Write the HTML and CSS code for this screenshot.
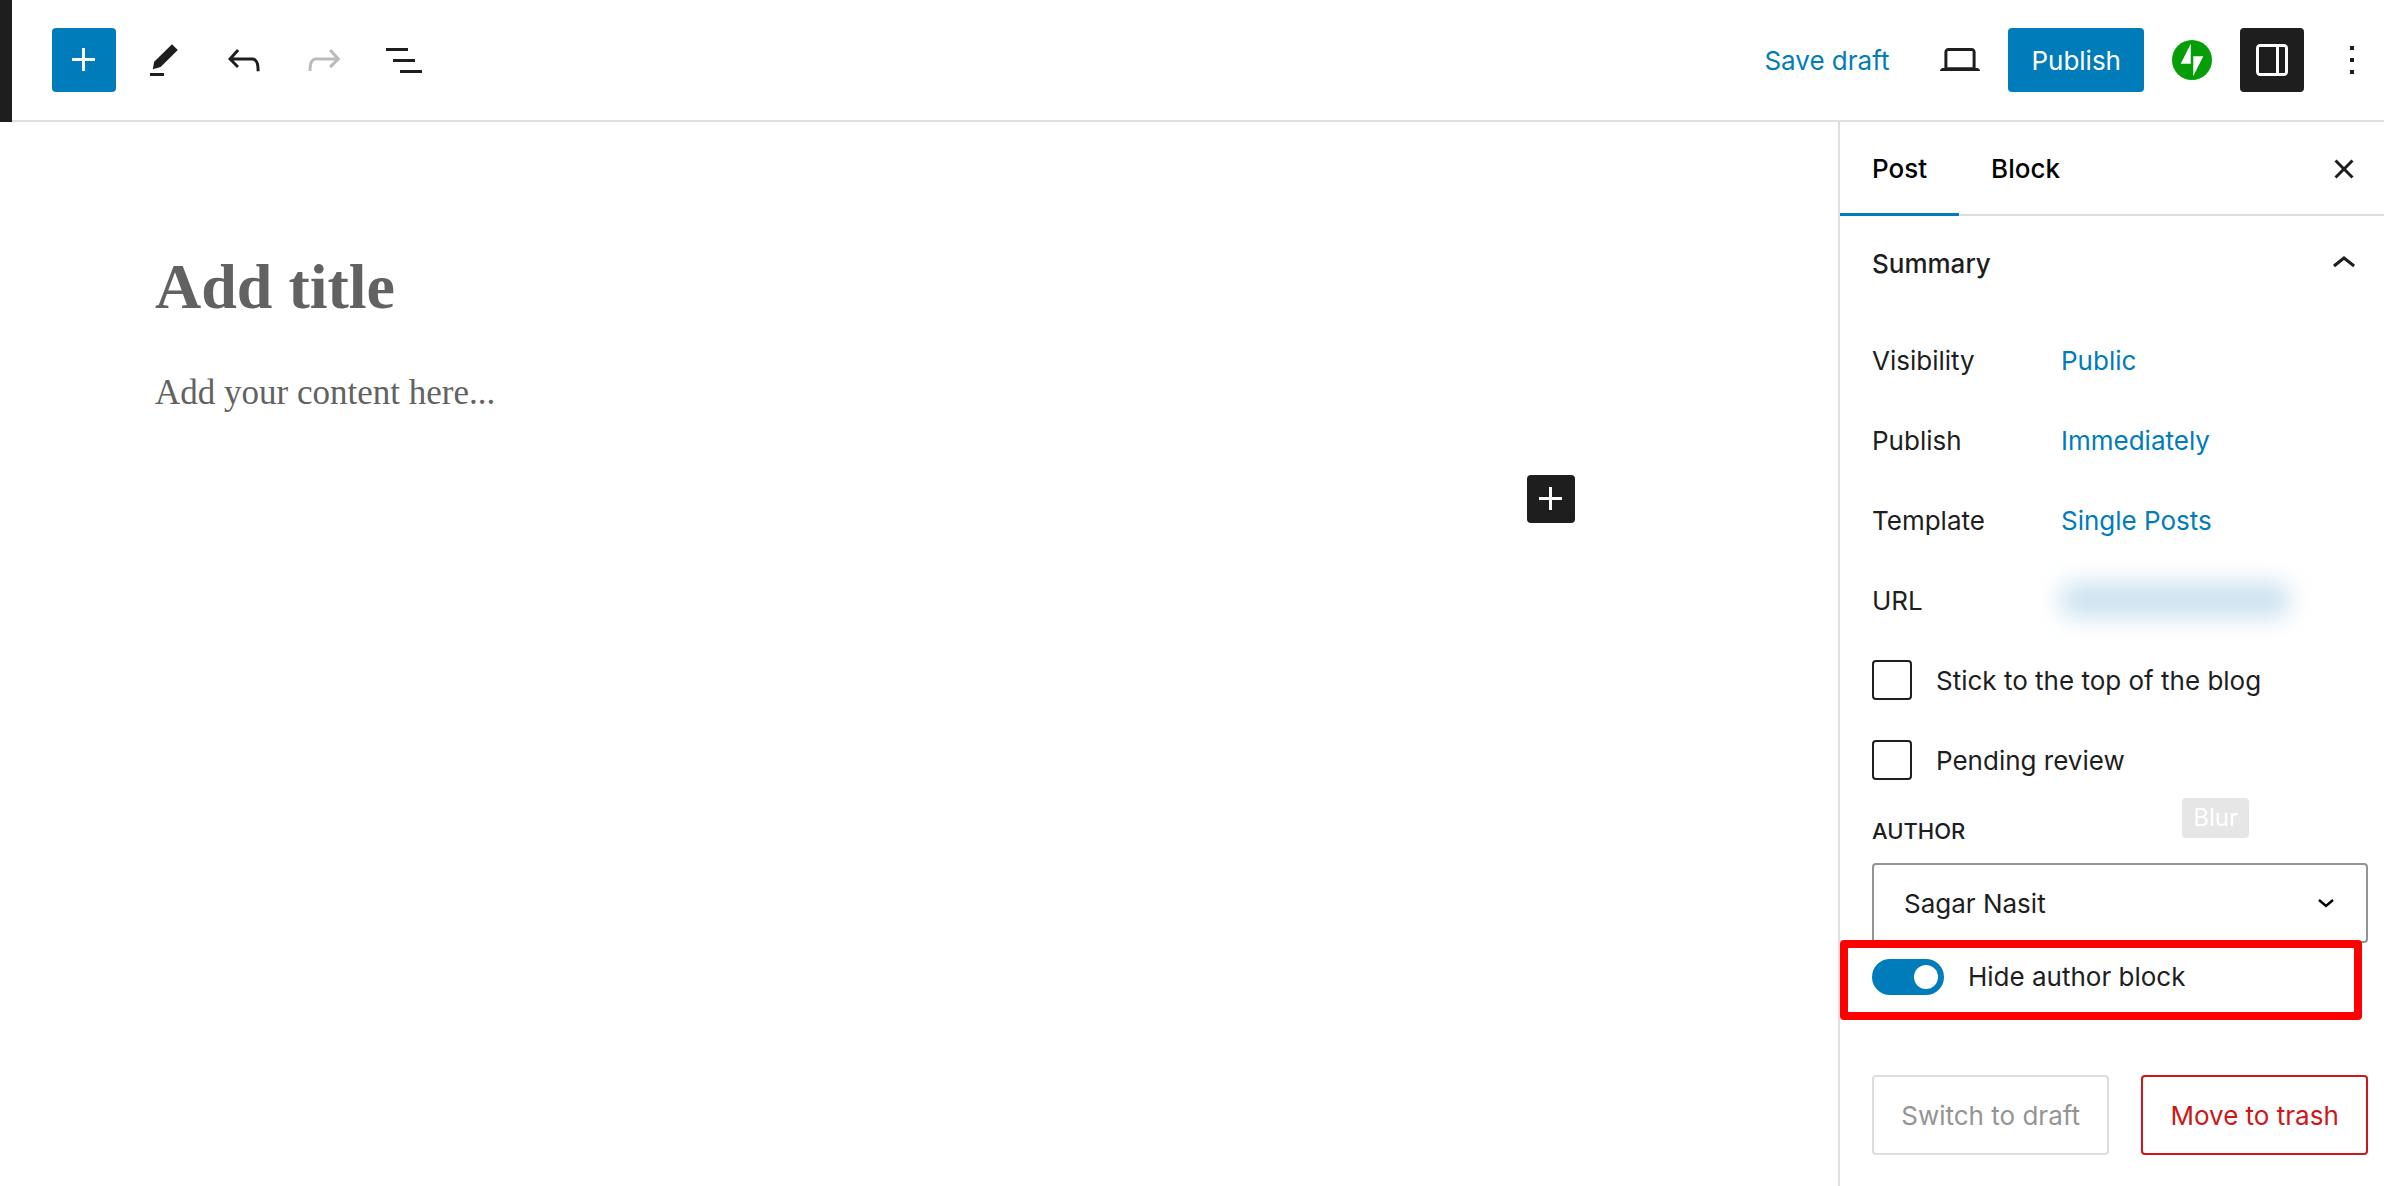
FILE: index.html
```html
<!DOCTYPE html>
<html lang="en">
<head>
  <meta charset="UTF-8">
  <meta name="viewport" content="width=device-width, initial-scale=1.0">
  <title>Add New Post</title>
  <link rel="stylesheet" href="styles.css">
</head>
<body>
  <!-- Top toolbar -->
  <header class="header">
    <div class="header-edge"></div>
    <div class="toolbar">
      <button class="icon-button primary" aria-label="Toggle block inserter">
        <svg class="icon" viewBox="0 0 24 24"><path d="M11 12.5V17.5H12.5V12.5H17.5V11H12.5V6H11V11H6V12.5H11Z"/></svg>
      </button>
      <button class="icon-button" aria-label="Tools">
        <svg class="icon" viewBox="0 0 24 24"><path d="M16 4.1L18.9 7 10.3 15.5 6.4 16.6 7.1 12.9zM5 18.5h7V20H5z"/></svg>
      </button>
      <button class="icon-button" aria-label="Undo">
        <svg class="icon" viewBox="0 0 24 24"><path d="M18.3 11.7c-.6-.6-1.4-.9-2.3-.9H6.7l2.9-3.3-1.1-1-4.5 5L8.5 16l1-1-2.7-2.7H16c.5 0 .9.2 1.3.5 1 1 1 3.4 1 4.5v.3h1.5v-.2c0-1.5 0-4.3-1.5-5.7z"/></svg>
      </button>
      <button class="icon-button" aria-label="Redo" disabled>
        <svg class="icon" viewBox="0 0 24 24"><path d="M15.6 6.5l-1.1 1 2.9 3.3H8c-.9 0-1.7.3-2.3.9-1.4 1.5-1.4 4.2-1.4 5.6v.2h1.5v-.3c0-1.1 0-3.5 1-4.5.3-.3.7-.5 1.3-.5h9.2L14.5 15l1.1 1.1 4.6-4.6-4.6-5z"/></svg>
      </button>
      <button class="icon-button" aria-label="Document overview">
        <svg class="icon" viewBox="0 0 24 24"><path d="M3 6h11v1.5H3zM6.5 11.5h11V13h-11zM10 17h11v1.5H10z"/></svg>
      </button>
    </div>
    <div class="settings">
      <button class="link-button">Save draft</button>
      <button class="icon-button" aria-label="Preview">
        <svg class="icon" viewBox="0 0 24 24"><path d="M20.5 16h-.7V8c0-1.1-.9-2-2-2H6.2c-1.1 0-2 .9-2 2v8h-.7c-.8 0-1.5.7-1.5 1.5h20c0-.8-.7-1.5-1.5-1.5zM5.7 8c0-.3.2-.5.5-.5h11.6c.3 0 .5.2.5.5v7.6H5.7V8z"/></svg>
      </button>
      <button class="publish-button">Publish</button>
      <button class="icon-button" aria-label="Jetpack">
        <svg class="jetpack" viewBox="0 0 32 32"><circle cx="16" cy="16" r="16" fill="#069e08"/><path fill="#fff" d="M15 19H7l8-16zM17 29V13h8z"/></svg>
      </button>
      <button class="icon-button pressed" aria-label="Settings">
        <svg class="icon" viewBox="0 0 24 24"><path d="M18 4H6c-1.1 0-2 .9-2 2v12c0 1.1.9 2 2 2h12c1.1 0 2-.9 2-2V6c0-1.1-.9-2-2-2zm-4 14.5H6c-.3 0-.5-.2-.5-.5V6c0-.3.2-.5.5-.5h8v13zm4.5-.5c0 .3-.2.5-.5.5h-2.5v-13H18c.3 0 .5.2.5.5v12z"/></svg>
      </button>
      <button class="icon-button" aria-label="Options">
        <svg class="icon" viewBox="0 0 24 24"><path d="M13 19h-2v-2h2v2zm0-6h-2v-2h2v2zm0-6h-2V5h2v2z"/></svg>
      </button>
    </div>
  </header>

  <div class="body">
    <!-- Editor canvas -->
    <main class="editor">
      <h1 class="post-title">Add title</h1>
      <p class="post-content">Add your content here...</p>
      <button class="inserter" aria-label="Add block">
        <svg class="icon" viewBox="0 0 24 24"><path d="M11 12.5V17.5H12.5V12.5H17.5V11H12.5V6H11V11H6V12.5H11Z"/></svg>
      </button>
    </main>

    <!-- Post settings -->
    <aside class="sidebar">
      <div class="tabs">
        <button class="tab active">Post</button>
        <button class="tab">Block</button>
        <button class="icon-button close" aria-label="Close settings">
          <svg class="icon" viewBox="0 0 24 24"><path d="M12 13.06l3.712 3.713 1.061-1.06L13.061 12l3.712-3.712-1.06-1.06L12 10.938 8.288 7.227l-1.061 1.06L10.939 12l-3.712 3.712 1.06 1.061L12 13.061z"/></svg>
        </button>
      </div>

      <button class="panel-title">
        Summary
        <svg class="icon" viewBox="0 0 24 24"><path d="M6.5 12.4L12 8l5.5 4.4-.9 1.2L12 10l-4.5 3.6-1-1.2z"/></svg>
      </button>

      <div class="panel">
        <div class="row"><span class="row-label">Visibility</span><a href="#">Public</a></div>
        <div class="row"><span class="row-label">Publish</span><a href="#">Immediately</a></div>
        <div class="row"><span class="row-label">Template</span><a href="#">Single Posts</a></div>
        <div class="row"><span class="row-label">URL</span><a class="blurred" href="#" aria-label="URL"></a></div>
        <div class="row check-row">
          <input type="checkbox" id="sticky">
          <label for="sticky">Stick to the top of the blog</label>
        </div>
        <div class="row check-row">
          <input type="checkbox" id="pending">
          <label for="pending">Pending review</label>
        </div>

        <div class="author">
          <label class="author-label" for="author">AUTHOR</label>
          <span class="badge">Blur</span>
          <div class="select">
            <select id="author">
              <option>Sagar Nasit</option>
            </select>
            <svg class="select-arrow" viewBox="0 0 18 10"><path d="M2 2l7 6 7-6" fill="none" stroke="#000" stroke-width="2.4"/></svg>
          </div>
        </div>

        <div class="toggle-row">
          <input type="checkbox" class="toggle" id="hide-author" checked>
          <label for="hide-author">Hide author block</label>
          <div class="highlight"></div>
        </div>

        <div class="actions">
          <button class="action" disabled>Switch to draft</button>
          <button class="action danger">Move to trash</button>
        </div>
      </div>
    </aside>
  </div>
</body>
</html>
```
FILE: styles.css
```css
* {
  box-sizing: border-box;
}

body {
  margin: 0;
  min-height: 100vh;
  display: flex;
  flex-direction: column;
  background: #fff;
  color: #1e1e1e;
  font-family: Inter, "Liberation Sans", sans-serif;
  font-size: 26px;
  line-height: 32px;
}

button,
select {
  margin: 0;
  padding: 0;
  border: none;
  background: none;
  color: inherit;
  font: inherit;
  cursor: pointer;
}

a {
  color: #007cba;
  text-decoration: none;
}

.icon {
  width: 48px;
  height: 48px;
  fill: currentColor;
  flex-shrink: 0;
}

/* Header */
.header {
  display: flex;
  height: 122px;
}

.header-edge {
  width: 12px;
  background: #1e1e1e;
}

.toolbar,
.settings {
  display: flex;
  align-items: center;
  gap: 16px;
  border-bottom: 2px solid #e0e0e0;
}

.toolbar {
  flex: 1;
  padding-left: 40px;
}

.icon-button {
  display: flex;
  align-items: center;
  justify-content: center;
  width: 64px;
  height: 64px;
  border-radius: 4px;
}

.icon-button:disabled {
  color: #bbb;
}

.primary {
  background: #007cba;
  color: #fff;
}

.pressed {
  background: #1e1e1e;
  color: #fff;
}

.link-button,
.publish-button {
  height: 64px;
  padding: 2px 23px 0;
}

.link-button {
  color: #007cba;
}

.publish-button {
  border-radius: 4px;
  background: #007cba;
  color: #fff;
}

.jetpack {
  width: 40px;
  height: 40px;
}

/* Editor */
.body {
  flex: 1;
  display: flex;
}

.editor {
  flex: 1;
  display: flex;
  flex-direction: column;
  padding: 127px 263px 0 155px;
  color: #626262;
  font-family: "Liberation Serif", serif;
}

.post-title {
  margin: 0;
  font-size: 64px;
  line-height: 76px;
}

.post-content {
  margin: 44px 0 0;
  font-size: 35px;
  line-height: 48px;
}

.inserter {
  align-self: flex-end;
  width: 48px;
  height: 48px;
  margin-top: 58px;
  border-radius: 4px;
  background: #1e1e1e;
  color: #fff;
}

/* Sidebar */
.sidebar {
  width: 546px;
  border-left: 2px solid #e0e0e0;
}

.tabs {
  display: flex;
  height: 94px;
  box-shadow: inset 0 -2px #ddd;
}

.tab {
  padding: 0 32px;
  color: #000;
  font-weight: 500;
}

.active {
  box-shadow: inset 0 -3px #007cba;
}

.close {
  align-self: center;
  margin: 0 8px 0 auto;
}

.panel-title {
  display: flex;
  align-items: center;
  justify-content: space-between;
  width: 100%;
  height: 96px;
  padding: 0 16px 0 32px;
  font-weight: 500;
}

.panel {
  display: flex;
  flex-direction: column;
  gap: 16px;
  padding: 16px 16px 24px 32px;
}

.row {
  display: flex;
  align-items: center;
  height: 64px;
}

.row span,
.row a,
.row label {
  padding-top: 2px;
}

.row-label {
  width: 189px;
}

.blurred {
  width: 228px;
  height: 34px;
  border-radius: 12px;
  background: #c9e1ee;
  filter: blur(12px);
}

.check-row {
  gap: 24px;
}

.check-row input {
  appearance: none;
  width: 40px;
  height: 40px;
  margin: 0;
  border: 2px solid #1e1e1e;
  border-radius: 4px;
}

.author {
  position: relative;
  padding-top: 7px;
}

.author-label {
  display: block;
  margin-bottom: 16px;
  font-size: 22px;
  font-weight: 500;
  line-height: 32px;
}

.badge {
  position: absolute;
  top: -10px;
  right: 119px;
  padding: 4px 11px;
  border-radius: 4px;
  background: #e6e6e6;
  color: #fff;
  font-size: 24px;
}

.select {
  display: grid;
  align-items: center;
}

.select select,
.select-arrow {
  grid-area: 1 / 1;
}

.select select {
  appearance: none;
  width: 100%;
  height: 80px;
  padding: 2px 30px 0;
  border: 2px solid #949494;
  border-radius: 4px;
}

.select-arrow {
  justify-self: end;
  width: 18px;
  height: 10px;
  margin-right: 33px;
  pointer-events: none;
}

.toggle-row {
  position: relative;
  display: flex;
  align-items: center;
  gap: 24px;
}

.toggle {
  appearance: none;
  display: flex;
  width: 72px;
  height: 36px;
  margin: 0;
  padding: 6px;
  border-radius: 18px;
  background: #949494;
}

.toggle::before {
  content: "";
  width: 24px;
  height: 24px;
  border-radius: 50%;
  background: #fff;
}

.toggle:checked {
  justify-content: flex-end;
  background: #007cba;
}

.highlight {
  position: absolute;
  top: -19px;
  right: 6px;
  bottom: -25px;
  left: -32px;
  border: 8px solid #f00;
  border-radius: 4px;
  pointer-events: none;
}

.actions {
  display: flex;
  gap: 32px;
  margin-top: 64px;
}

.action {
  flex: auto;
  height: 80px;
  padding-top: 2px;
  border: 2px solid #ddd;
  border-radius: 4px;
  color: #949494;
}

.danger {
  border-color: #cc1818;
  color: #cc1818;
}
```
